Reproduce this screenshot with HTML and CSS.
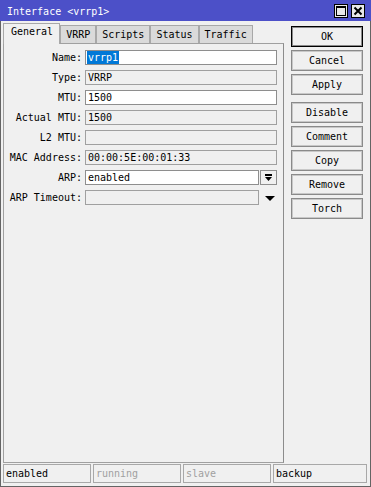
FILE: index.html
```html
<!doctype html>
<html>
<head>
<meta charset="UTF-8">
<title>Interface &lt;vrrp1&gt;</title>
<link rel="stylesheet" href="styles.css">
</head>
<body>
<div class="window">
	<div class="titlebar">
		<span class="title">Interface &lt;vrrp1&gt;</span>
		<div class="tbtns">
			<span class="tbtn"><svg width="12" height="12" viewBox="0 0 12 12"><rect x="1.5" y="1.5" width="9" height="9" fill="none" stroke="#000"/><rect x="1" y="1" width="10" height="2" fill="#000"/></svg></span>
			<span class="tbtn"><svg width="12" height="12" viewBox="0 0 12 12"><path d="M2.5 2.5 L9.5 9.5 M9.5 2.5 L2.5 9.5" stroke="#000" stroke-width="2"/></svg></span>
		</div>
	</div>
	<div class="main">
		<div class="left">
			<ul class="tabs">
				<li class="on">General</li>
				<li>VRRP</li>
				<li>Scripts</li>
				<li>Status</li>
				<li>Traffic</li>
			</ul>
			<div class="panel">
				<div class="row"><span class="lbl">Name:</span><span class="field edit"><span class="sel">vrrp1</span></span></div>
				<div class="row"><span class="lbl">Type:</span><span class="field">VRRP</span></div>
				<div class="row"><span class="lbl">MTU:</span><span class="field edit">1500</span></div>
				<div class="row"><span class="lbl">Actual MTU:</span><span class="field">1500</span></div>
				<div class="row"><span class="lbl">L2 MTU:</span><span class="field"></span></div>
				<div class="row"><span class="lbl">MAC Address:</span><span class="field">00:00:5E:00:01:33</span></div>
				<div class="row"><span class="lbl">ARP:</span><span class="field edit short">enabled</span><span class="dd"><svg width="9" height="8" viewBox="0 0 9 8"><rect x="1" y="0" width="7" height="2" fill="#000"/><path d="M1 3 H8 L4.5 7 Z" fill="#000"/></svg></span></div>
				<div class="row"><span class="lbl">ARP Timeout:</span><span class="field short"></span><span class="arrow"><svg width="10" height="5" viewBox="0 0 10 5"><path d="M0 0 H10 L5 5 Z" fill="#000"/></svg></span></div>
			</div>
		</div>
		<div class="buttons">
			<a class="btn def">OK</a>
			<a class="btn">Cancel</a>
			<a class="btn">Apply</a>
			<a class="btn sep">Disable</a>
			<a class="btn">Comment</a>
			<a class="btn">Copy</a>
			<a class="btn">Remove</a>
			<a class="btn">Torch</a>
		</div>
	</div>
	<div class="statusbar">
		<span class="cell">enabled</span>
		<span class="cell off">running</span>
		<span class="cell off">slave</span>
		<span class="cell wide">backup</span>
	</div>
</div>
</body>
</html>
```

FILE: styles.css
```css
*{ margin:0; padding:0; box-sizing:border-box; list-style:none; }
body{ background:#fff; font-family:"DejaVu Sans Mono", monospace; font-size:10px; color:#000; }
.window{ width:371px; height:487px; border:1px solid #646464; border-top:0; background:#f0f0f0; display:flex; flex-direction:column; }

.titlebar{ height:21px; margin:0 -1px; padding:2px 6px 0 7px; background:#4c50c8; color:#fff; display:flex; align-items:center; justify-content:space-between; }
.title{ line-height:13px; }
.tbtns{ display:flex; gap:3px; margin-top:-2px; }
.tbtn{ width:14px; height:14px; border:1px solid #000; background:#e8e8e8; display:flex; align-items:center; justify-content:center; }

.main{ display:flex; height:442px; }
.left{ margin:2px 0 0 2px; width:281px; display:flex; flex-direction:column; }
.tabs{ display:flex; align-items:flex-end; height:20px; }
.tabs li{ height:18px; padding:0 5px; border:1px solid #a8a8a8; border-bottom:0; background:#dadada; line-height:17px; }
.tabs li.on{ height:21px; margin-bottom:-1px; padding:0 6px 0 7px; background:#f0f0f0; position:relative; z-index:1; line-height:16px; }
.panel{ height:420px; border:1px solid #a0a0a0; border-right-color:#8c8c8c; padding-top:6px; }

.row{ display:flex; align-items:center; height:15px; margin-bottom:5px; }
.lbl{ width:78px; text-align:right; margin-right:3px; white-space:nowrap; }
.field{ width:192px; height:15px; border:1px solid #a0a0a0; background:#f0f0f0; padding-left:2px; line-height:13px; white-space:nowrap; }
.field.edit{ background:#fff; border-color:#8e8e8e; }
.field.short{ width:174px; }
.sel{ display:inline-block; margin-left:-1px; padding:0 1px; height:13px; background:#0078d7; color:#fff; }
.dd{ width:17px; height:15px; margin-left:1px; border:1px solid #8e8e8e; display:flex; align-items:center; justify-content:center; }
.arrow{ display:flex; padding:1px 0 0 6px; }

.buttons{ margin:5px 0 0 7px; width:72px; display:flex; flex-direction:column; }
.btn{ height:21px; margin-bottom:3px; border:1px solid #8a8a8a; box-shadow:inset 0 0 0 1px #c8c8c8; background:#f0f0f0; text-align:center; line-height:19px; cursor:pointer; }
.btn.def{ border-color:#000; box-shadow:inset 0 0 0 1px #8a8a8a; }
.btn.sep{ margin-top:4px; }

.statusbar{ display:flex; gap:2px; height:19px; margin:1px 0 0 2px; }
.cell{ width:88px; height:19px; border:1px solid #a8a8a8; padding-left:2px; line-height:17px; }
.cell.off{ color:#a0a0a0; }
.cell.wide{ width:94px; }
```
